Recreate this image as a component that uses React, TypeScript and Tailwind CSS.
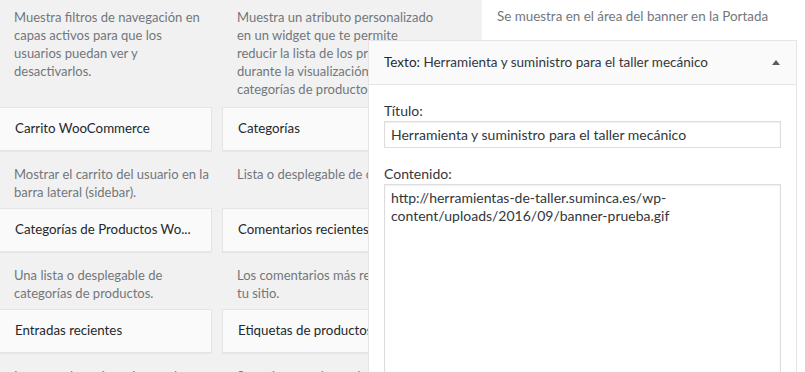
import React from 'react';

const font = { fontFamily: 'Lato, "Noto Sans", "Liberation Sans", sans-serif' };

interface Widget {
    title: string;
    desc: string[];
}

// left column and right column of the available widgets list
const rows: [Widget, Widget][] = [
    [
        { title: 'Carrito WooCommerce', desc: ['Mostrar el carrito del usuario en la', 'barra lateral (sidebar).'] },
        { title: 'Categorías', desc: ['Lista o desplegable de categorías.'] },
    ],
    [
        { title: 'Categorías de Productos Wo...', desc: ['Una lista o desplegable de', 'categorías de productos.'] },
        { title: 'Comentarios recientes', desc: ['Los comentarios más recientes de', 'tu sitio.'] },
    ],
    [
        { title: 'Entradas recientes', desc: ['Las entradas más recientes de tu', 'sitio.'] },
        { title: 'Etiquetas de productos', desc: ['Sus etiquetas de productos más', 'usadas en formato de nube.'] },
    ],
];

const WidgetCard: React.FC<{ title: string }> = ({ title }) => (
    <div className="h-[44px] w-[213px] shrink-0 border border-[#e5e5e5] bg-[#fafafa] px-[15px] flex items-center shadow-[0_1px_1px_rgba(0,0,0,0.04)]">
        <span className="text-[13.3px] text-[#23282d] whitespace-nowrap">{title}</span>
    </div>
);

const Desc: React.FC<{ lines: string[]; className?: string }> = ({ lines, className }) => (
    <div className={'w-[213px] shrink-0 pl-[15px] text-[13px] leading-[18px] text-[#72777c] ' + (className ?? '')}>
        {lines.map((l) => (
            <div key={l} className="whitespace-nowrap">{l}</div>
        ))}
    </div>
);

export default function App() {
    return (
        <div className="relative w-[805px] h-[372px] overflow-hidden flex bg-white" style={font}>
            {/* available widgets */}
            <div className="w-[482px] h-full bg-[#f1f1f1] overflow-hidden">
                <div className="ml-[-1px] flex flex-col">
                    <div className="flex gap-[10px] h-[107px]">
                        <Desc
                            className="pt-[8px] text-[13.4px]"
                            lines={['Muestra filtros de navegación en', 'capas activos para que los', 'usuarios puedan ver y', 'desactivarlos.']}
                        />
                        <Desc
                            className="pt-[8px] text-[13.4px]"
                            lines={[
                                'Muestra un atributo personalizado',
                                'en un widget que te permite',
                                'reducir la lista de los productos',
                                'durante la visualización de',
                                'categorías de productos.',
                            ]}
                        />
                    </div>
                    {rows.map(([a, b]) => (
                        <div key={a.title}>
                            <div className="flex gap-[10px]">
                                <WidgetCard title={a.title} />
                                <WidgetCard title={b.title} />
                            </div>
                            <div className="flex gap-[10px] h-[57px]">
                                <Desc className="pt-[14px]" lines={a.desc} />
                                <Desc className="pt-[14px]" lines={b.desc} />
                            </div>
                        </div>
                    ))}
                </div>
            </div>

            {/* sidebar */}
            <div className="flex-1 pl-[15px] pt-[7px]">
                <p className="text-[13.4px] leading-[18px] text-[#72777c] whitespace-nowrap">Se muestra en el área del banner en la Portada</p>
            </div>

            {/* expanded widget being edited */}
            <div className="absolute left-[368px] top-[40px] w-[429px] h-[340px] border border-[#e5e5e5] bg-white shadow-[0_1px_1px_rgba(0,0,0,0.04)]">
                <div className="h-[44px] bg-[#fafafa] border-b border-[#e5e5e5] pl-[15px] pr-[16px] flex items-center justify-between">
                    <span className="text-[13.5px] text-[#23282d] whitespace-nowrap">
                        Texto:<span className="text-[#32373c]"> Herramienta y suministro para el taller mecánico</span>
                    </span>
                    <svg width="8" height="5" viewBox="0 0 8 5" className="mb-[1px]">
                        <path d="M4 0 L8 5 L0 5 Z" fill="#555d66" />
                    </svg>
                </div>
                <div className="px-[15px] pt-[17px]">
                    <label className="block text-[14px] leading-[18px] text-[#32373c] mb-[1px]">Título:</label>
                    <input
                        readOnly
                        value="Herramienta y suministro para el taller mecánico"
                        className="w-full h-[27px] border border-[#dddddd] px-[6px] text-[14px] text-[#32373c] shadow-[inset_0_1px_2px_rgba(0,0,0,0.07)] outline-none"
                        style={font}
                    />
                    <label className="block mt-[17px] text-[14px] leading-[18px] text-[#32373c] mb-[1px]">Contenido:</label>
                    <textarea
                        readOnly
                        value="http://herramientas-de-taller.suminca.es/wp-content/uploads/2016/09/banner-prueba.gif"
                        className="w-full h-[200px] border border-[#dddddd] px-[6px] py-[4px] text-[14px] leading-[18px] text-[#32373c] resize-none shadow-[inset_0_1px_2px_rgba(0,0,0,0.07)] outline-none"
                        style={font}
                    />
                </div>
            </div>
        </div>
    );
}
